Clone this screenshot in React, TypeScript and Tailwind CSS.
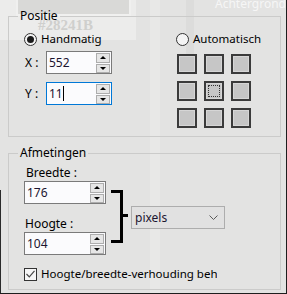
import React from "react";

function Spinner() {
    return (
        <div className="flex flex-col gap-[1px] pr-[1px]">
            <div className="w-[14px] h-[10px] bg-[#e6e6e6] border border-[#adadad] flex items-center justify-center">
                <div className="w-0 h-0 border-l-[3px] border-r-[3px] border-b-[3px] border-l-transparent border-r-transparent border-b-black" />
            </div>
            <div className="w-[14px] h-[9px] bg-[#e6e6e6] border border-[#adadad] flex items-center justify-center">
                <div className="w-0 h-0 border-l-[3px] border-r-[3px] border-t-[3px] border-l-transparent border-r-transparent border-t-black" />
            </div>
        </div>
    );
}

function NumberBox({ value, width, focused, caret }: { value: string; width: string; focused?: boolean; caret?: boolean }) {
    return (
        <div
            className={`${width} h-[23px] flex items-center justify-between bg-[#fbfbfd] border ${
                focused ? "border-[#0078d7]" : "border-[#7a7a7a]"
            }`}
        >
            <div className="flex items-center pl-[2px] text-[12px] leading-[14px] text-[#1c1530]">
                {value}
                {caret && <div className="w-[1px] h-[15px] bg-black" />}
            </div>
            <Spinner />
        </div>
    );
}

function Radio({ checked, label }: { checked?: boolean; label: string }) {
    return (
        <div className="flex items-center gap-[4px] h-[14px]">
            <div className="w-[13px] h-[13px] rounded-full border border-[#333] bg-[#f4f4f4] flex items-center justify-center">
                {checked && <div className="w-[7px] h-[7px] rounded-full bg-[#1a1a1a]" />}
            </div>
            <span className="text-[11.5px] leading-[14px] text-black">{label}</span>
        </div>
    );
}

function Cell({ center }: { center?: boolean }) {
    return (
        <div className="w-[20px] h-[20px] border-2 border-[#3b3b3b] bg-[#c6c6c6] shadow-[inset_0_0_0_1px_#d6d6d6] flex items-center justify-center">
            {center && <div className="w-[12px] h-[12px] border border-dotted border-[#333]" />}
        </div>
    );
}

export default function App() {
    const cells = [0, 1, 2, 3, 4, 5, 6, 7, 8];

    return (
        <div
            className="relative w-[287px] h-[294px] overflow-hidden bg-[#e3e3e2] border-r border-b border-[#1e1e1e]"
            style={{ fontFamily: '"Noto Sans", "Segoe UI", sans-serif' }}
        >
            {/* ghosted window behind the dialog */}
            <div className="absolute left-0 top-0 w-[136px] h-[40px] bg-[#ececeb]" />
            <div className="absolute left-[16px] top-0 w-[115px] h-[16px] bg-[#d9d9d7] border-x-[2px] border-b-[2px] border-[#f0f0ef]" />
            <div className="absolute left-[38px] top-[17px] text-[15px] leading-[16px] font-bold text-[#cfcfcd]" style={{ fontFamily: '"Liberation Serif", serif' }}>
                #28241B
            </div>
            <div className="absolute left-[150px] top-0 w-[10px] h-[294px] bg-[#e8e8e7]" />
            <div className="absolute left-[186px] top-0 w-[8px] h-[60px] bg-[#dcdcdb]" />
            <div className="absolute left-[215px] top-[-3px] text-[12px] leading-[14px] text-[#f6f6f6]">Achtergrond</div>
            <div className="absolute left-0 top-[190px] w-[1px] h-[104px] bg-[#2a2a2a]" />

            <div className="relative pt-[8px] pl-[8px]">
                <fieldset className="w-[273px] border border-[#cbcbca] pb-[8px]">
                    <legend className="ml-[9px] px-[2px] text-[12px] leading-[16px] text-black">Positie</legend>
                    <div className="flex pl-[15px]">
                        <div className="w-[152px] flex flex-col">
                            <div className="mt-[8px]">
                                <Radio checked label="Handmatig" />
                            </div>
                            <div className="mt-[5px] flex items-center">
                                <span className="w-[22px] pl-[1px] text-[12px] leading-[14px] text-black">X :</span>
                                <NumberBox value="552" width="w-[66px]" />
                            </div>
                            <div className="mt-[8px] flex items-center">
                                <span className="w-[22px] pl-[1px] text-[12px] leading-[14px] text-black">Y :</span>
                                <NumberBox value="11" width="w-[66px]" focused caret />
                            </div>
                        </div>
                        <div className="flex flex-col">
                            <div className="mt-[8px]">
                                <Radio label="Automatisch" />
                            </div>
                            <div className="mt-[8px] ml-[1px] grid grid-cols-3 gap-[7px] w-fit">
                                {cells.map((i) => (
                                    <Cell key={i} center={i === 4} />
                                ))}
                            </div>
                        </div>
                    </div>
                </fieldset>

                <fieldset className="mt-[8px] w-[273px] h-[145px] border border-[#cbcbca]">
                    <legend className="ml-[9px] px-[2px] text-[12px] leading-[16px] text-black">Afmetingen</legend>
                    <div className="flex pl-[15px] mt-[5px]">
                        <div className="w-[82px] flex flex-col">
                            <span className="pl-[2px] text-[12px] leading-[14px] text-black">Breedte :</span>
                            <div className="mt-[1px]">
                                <NumberBox value="176" width="w-[82px]" />
                            </div>
                            <span className="mt-[13px] pl-[1px] text-[12px] leading-[14px] text-black">Hoogte :</span>
                            <div className="mt-[1px]">
                                <NumberBox value="104" width="w-[82px]" />
                            </div>
                        </div>
                        <div className="ml-[5px] mt-[24px] flex items-start">
                            <div className="w-[12px] h-[53px] border-t-[3px] border-r-[3px] border-b-[3px] border-black" />
                            <div className="mt-[24px] w-[5px] h-[3px] bg-black" />
                            <div className="ml-[3px] mt-[16px] w-[94px] h-[23px] bg-[#e1e1e1] border border-[#adadad] flex items-center justify-between pl-[3px] pr-[6px]">
                                <span className="text-[12px] leading-[14px] text-[#1c1530]">pixels</span>
                                <svg width="9" height="5" viewBox="0 0 9 5">
                                    <path d="M0.5 0.5 L4.5 4.5 L8.5 0.5" fill="none" stroke="#5a5a5a" strokeWidth="1" />
                                </svg>
                            </div>
                        </div>
                    </div>
                    <div className="mt-[12px] pl-[15px] flex items-center gap-[4px]">
                        <div className="w-[13px] h-[13px] border border-[#333] bg-[#f6f6f6] flex items-center justify-center">
                            <svg width="9" height="8" viewBox="0 0 9 8">
                                <path d="M0.5 4 L3.3 6.8 L8.5 0.8" fill="none" stroke="#4a4a4a" strokeWidth="1.2" />
                            </svg>
                        </div>
                        <div className="w-[176px] overflow-hidden whitespace-nowrap text-[11.5px] leading-[14px] text-black">
                            Hoogte/breedte-verhouding behouden
                        </div>
                    </div>
                </fieldset>
            </div>
        </div>
    );
}
